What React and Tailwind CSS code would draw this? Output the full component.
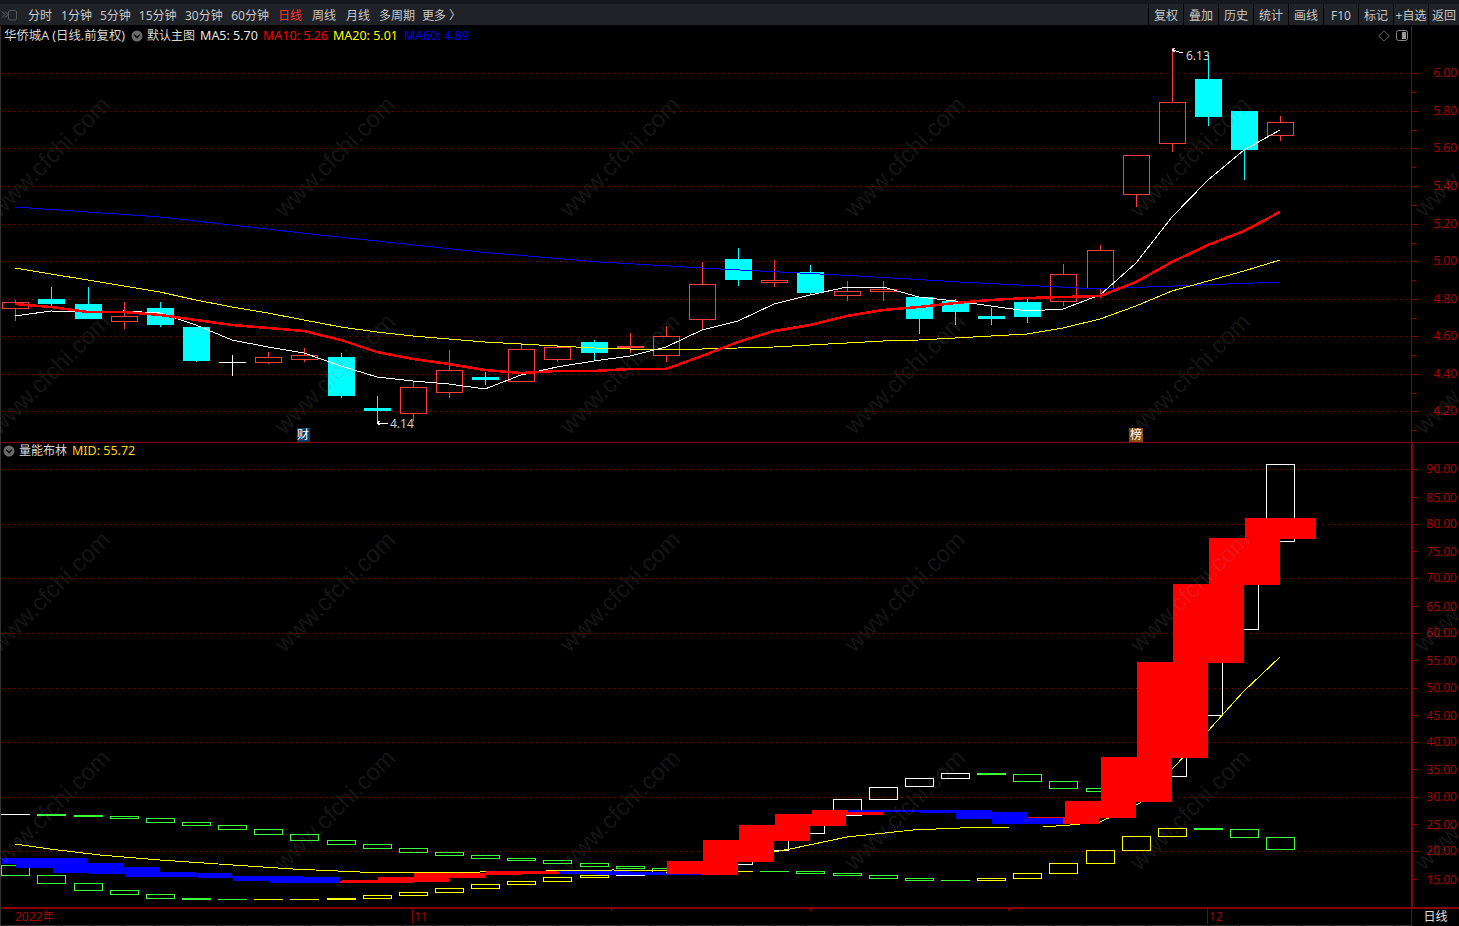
import React from 'react';

const RED = '#ff3c3c';
const CYAN = '#00ffff';
const GREEN = '#3cff3c';
const YELLOW = '#ffff00';
const WHITE = '#ffffff';
const AXIS = '#8a0000';
const LABEL = '#a80000';

const cx = (i) => Math.round(15.3 + 36.14 * i);

// [kind, top, bottom, high, low]  r hollow red, f solid red, c solid cyan, w white cross
const candles = [
  ['r', 302, 309, 300, 321], ['c', 299, 304, 287, 306], ['c', 304, 319, 287, 319], ['r', 316, 322, 302, 329],
  ['c', 308, 325, 302, 327], ['c', 327, 361, 327, 362], ['w', 362, 363, 355, 376], ['r', 357, 363, 352, 364],
  ['r', 355, 360, 348, 362], ['c', 357, 396, 353, 398], ['c', 408, 411, 396, 423], ['r', 387, 414, 382, 421],
  ['r', 370, 393, 350, 398], ['c', 377, 380, 372, 385], ['r', 349, 382, 343, 382], ['r', 347, 360, 345, 362],
  ['c', 342, 353, 340, 360], ['f', 346, 348, 333, 353], ['r', 336, 356, 326, 362], ['r', 284, 320, 262, 329],
  ['c', 259, 280, 248, 286], ['r', 280, 283, 260, 287], ['c', 272, 293, 265, 295], ['r', 291, 296, 281, 301],
  ['r', 289, 292, 281, 301], ['c', 297, 319, 297, 334], ['c', 301, 312, 299, 325], ['c', 316, 319, 308, 325],
  ['c', 302, 317, 299, 323], ['r', 274, 302, 264, 306], ['r', 250, 289, 245, 298], ['r', 155, 195, 155, 207],
  ['r', 102, 144, 48, 152], ['c', 79, 117, 55, 126], ['c', 111, 150, 111, 180], ['r', 122, 136, 116, 141],
];

const ma5 = [316, 311, 312, 311, 313, 325, 340, 347, 353, 366, 377, 381, 384, 389, 375, 367, 361, 356, 347, 330, 321, 304, 295, 287, 287, 297, 301, 306, 311, 309, 295, 263, 217, 180, 150, 130];
const ma10 = [304, 307, 312, 312, 315, 320, 325, 328, 331, 340, 352, 359, 364, 370, 373, 371, 371, 369, 369, 356, 342, 331, 325, 316, 310, 307, 303, 300, 298, 297, 296, 282, 262, 245, 231, 212];
const ma20 = [268, 274, 280, 286, 292, 300, 307, 313, 320, 327, 332, 336, 339, 342, 344, 346, 348, 349, 349, 349, 348, 347, 345, 343, 341, 340, 338, 336, 334, 328, 319, 306, 291, 281, 271, 260];
const ma60 = [[15, 207], [160, 217], [320, 235], [480, 252], [600, 262], [720, 269], [840, 275], [960, 282], [1060, 287], [1093, 289], [1173, 286], [1280, 282]];

const toPoints = (list) => list.map((y, i) => `${cx(i)},${y}`).join(' ');

// [index, top, bottom, colour, solid]
const bands = [
  [0, 814, 815, WHITE, 1], [1, 814, 816, GREEN, 1], [2, 815, 817, GREEN, 1], [3, 816, 819, GREEN], [4, 818, 823, GREEN],
  [5, 822, 826, GREEN], [6, 825, 830, GREEN], [7, 829, 835, GREEN], [8, 834, 841, GREEN], [9, 840, 845, GREEN],
  [10, 844, 849, GREEN], [11, 848, 853, GREEN], [12, 852, 856, GREEN], [13, 855, 859, GREEN], [14, 858, 861, GREEN],
  [15, 860, 864, GREEN], [16, 863, 867, GREEN], [17, 866, 869, GREEN], [18, 868, 871, GREEN], [19, 865, 870, WHITE],
  [20, 851, 865, WHITE], [21, 834, 851, WHITE], [22, 816, 834, WHITE], [23, 799, 816, WHITE], [24, 787, 800, WHITE],
  [25, 778, 787, WHITE], [26, 773, 779, WHITE], [27, 773, 775, GREEN, 1], [28, 774, 782, GREEN], [29, 781, 789, GREEN],
  [30, 788, 792, GREEN], [31, 776, 795, WHITE], [32, 715, 777, WHITE], [33, 630, 716, WHITE], [34, 542, 630, WHITE], [35, 464, 542, WHITE],

  [0, 865, 876, GREEN], [1, 875, 884, GREEN], [2, 883, 891, GREEN], [3, 890, 895, GREEN], [4, 894, 899, GREEN],
  [5, 898, 900, GREEN, 1], [6, 899, 900, GREEN, 1], [7, 899, 900, YELLOW, 1], [8, 899, 900, YELLOW, 1], [9, 898, 900, YELLOW, 1],
  [10, 895, 899, YELLOW], [11, 892, 896, YELLOW], [12, 888, 893, YELLOW], [13, 884, 889, YELLOW], [14, 881, 885, YELLOW],
  [15, 877, 882, YELLOW], [16, 875, 878, YELLOW], [17, 872, 876, WHITE], [18, 870, 873, WHITE], [20, 871, 872, YELLOW, 1],
  [21, 871, 872, GREEN, 1], [22, 871, 874, GREEN], [23, 873, 876, GREEN], [24, 875, 879, GREEN], [25, 878, 881, GREEN],
  [26, 880, 881, GREEN, 1], [27, 878, 881, YELLOW], [28, 873, 879, YELLOW], [29, 863, 874, YELLOW], [30, 850, 864, YELLOW],
  [31, 836, 851, YELLOW], [32, 828, 837, YELLOW], [33, 828, 830, GREEN, 1], [34, 829, 838, GREEN], [35, 837, 850, GREEN],
];

const mid = [[15, 844], [50, 849], [100, 855], [160, 860], [233, 865], [293, 869], [360, 872], [480, 872], [613, 870], [666, 871], [702, 869], [738, 861], [773, 852], [790, 849], [847, 837], [913, 830], [960, 828], [1010, 827], [1043, 827], [1070, 825], [1100, 822], [1140, 803], [1208, 731], [1243, 692], [1280, 657]];

const redBlocks = [
  [9, 881, 883], [10, 880, 883], [11, 877, 882], [12, 873, 878], [13, 873, 875], [14, 871, 874], [15, 872, 874],
  [19, 861, 875], [20, 840, 862], [21, 825, 841], [22, 814, 826], [23, 810, 815], [29, 817, 824], [30, 801, 818],
  [31, 757, 802], [32, 662, 758], [33, 584, 663], [34, 538, 585], [35, 518, 539],
];
const blueBlocks = [
  [0, 858, 864], [1, 858, 868], [2, 863, 873], [3, 867, 874], [4, 872, 877], [5, 873, 877], [6, 876, 878], [7, 876, 881], [8, 877, 883],
  [16, 871, 874], [17, 872, 875], [18, 874, 875], [24, 810, 812], [25, 810, 812], [26, 810, 813], [27, 812, 819], [28, 818, 824],
];

const priceGrid = [6.0, 5.8, 5.6, 5.4, 5.2, 5.0, 4.8, 4.6, 4.4, 4.2].map((v, i) => ({ label: v.toFixed(2), y: Math.round(73.3 + 37.55 * i) }));
const rangeLabels = [90, 85, 80, 75, 70, 65, 60, 55, 50, 45, 40, 35, 30, 25, 20, 15].map((v, i) => ({ value: v, label: v.toFixed(2), y: Math.round(469.3 + 27.29 * i) }));

const tabs = [
  { t: '分时', c: '' },
  { t: '1分钟', c: 'ml-[9px]' },
  { t: '5分钟', c: 'ml-[8px]' },
  { t: '15分钟', c: 'ml-[8px]' },
  { t: '30分钟', c: 'ml-[8.5px]' },
  { t: '60分钟', c: 'ml-[8.5px]' },
  { t: '日线', c: 'ml-[9px] text-[#ff3232]' },
  { t: '周线', c: 'ml-[10px]' },
  { t: '月线', c: 'ml-[10px]' },
  { t: '多周期', c: 'ml-[9px]' },
  { t: '更多', c: 'ml-[7px]' },
];
const tools = ['复权', '叠加', '历史', '统计', '画线', 'F10', '标记', '+自选'];

const marks = [51, 336, 621, 906, 1191, 1476];
const markRows = [158, 375, 593, 811];

const Candle = ({ c, i }) => {
  const [kind, top, bottom, high, low] = c;
  const x = cx(i);
  if (kind === 'w') {
    return (
      <g stroke={WHITE}>
        <line x1={x + 0.5} x2={x + 0.5} y1={high} y2={low} />
        <line x1={x - 13} x2={x + 14} y1={top + 0.5} y2={top + 0.5} />
      </g>
    );
  }
  if (kind === 'r') {
    return (
      <g stroke={RED}>
        <line x1={x + 0.5} x2={x + 0.5} y1={high} y2={top} />
        <line x1={x + 0.5} x2={x + 0.5} y1={bottom} y2={low} />
        <rect x={x - 12.5} y={top + 0.5} width={26} height={bottom - top - 1} fill="none" />
      </g>
    );
  }
  const color = kind === 'c' ? CYAN : RED;
  return (
    <g>
      <line x1={x + 0.5} x2={x + 0.5} y1={high} y2={low} stroke={color} />
      <rect x={x - 13} y={top} width={27} height={bottom - top} fill={color} />
    </g>
  );
};

const Band = ({ b }) => {
  const [i, top, bottom, color, solid] = b;
  const x = cx(i);
  if (solid) return <rect x={x - 14} y={top} width={29} height={bottom - top} fill={color} />;
  return <rect x={x - 13.5} y={top + 0.5} width={28} height={bottom - top - 1} fill="none" stroke={color} />;
};

const Block = ({ b, color }) => {
  const [i, top, bottom] = b;
  const left = Math.max(cx(i) - 35, 2);
  return <rect x={left} y={top} width={cx(i) + 36 - left} height={bottom - top} fill={color} />;
};

const Chevron = () => (
  <svg width="12" height="12" viewBox="0 0 12 12" className="shrink-0">
    <circle cx="6" cy="6" r="5.5" fill="#6a6a6a" />
    <path d="M3.2 4.8 6 7.6 8.8 4.8" fill="none" stroke="#111" strokeWidth="1.5" />
  </svg>
);

export default function App() {
  return (
    <div className="relative flex h-[926px] w-[1459px] flex-col overflow-hidden bg-black text-xs font-['Noto_Sans','Noto_Sans_CJK_SC',sans-serif]">
      {/* toolbar */}
      <div className="flex h-[26px] shrink-0 flex-col border-b border-black bg-[#15171b]">
        <div className="mt-[4px] flex flex-1 items-center justify-between bg-[#1f2227] text-[#c8c8c8]">
          <div className="flex items-center pt-[2px]">
            <svg width="16" height="11" viewBox="0 0 16 11" className="ml-[1px] mr-[11px]">
              <path d="M1 1.5 4 4.5 1 7.5M4 1.5 7 4.5 4 7.5" fill="none" stroke="#666" />
              <rect x="7.5" y=".5" width="8" height="9.5" rx="1.5" fill="none" stroke="#555" />
            </svg>
            <div className="flex">
              {tabs.map((item) => <span key={item.t} className={item.c}>{item.t}</span>)}
            </div>
            <span className="ml-[3px]">〉</span>
          </div>
          <div className="flex h-full">
            {tools.map((t) => (
              <span key={t} className="flex w-[35px] items-center justify-center whitespace-nowrap border-l border-black pt-[2px]">{t}</span>
            ))}
            <span className="flex w-[31px] items-center justify-center whitespace-nowrap border-l border-black pt-[2px]">返回</span>
          </div>
        </div>
      </div>

      {/* price panel */}
      <div className="relative h-[417px] shrink-0">
        <svg width="1459" height="417" viewBox="0 26 1459 417" className="block" shapeRendering="crispEdges">
          {priceGrid.map((g) => (
            <line key={g.y} x1="2" x2="1410" y1={g.y + 0.5} y2={g.y + 0.5} stroke="#900000" strokeDasharray="1 5" />
          ))}
          {candles.map((c, i) => <Candle key={i} c={c} i={i} />)}
          <polyline points={ma60.join(' ')} fill="none" stroke="#0000ff" />
          <polyline points={toPoints(ma20)} fill="none" stroke={YELLOW} />
          <polyline points={toPoints(ma5)} fill="none" stroke={WHITE} />
          <polyline points={toPoints(ma10)} fill="none" stroke="#ff0000" strokeWidth="2.5" />
          <path d="M1172 50 1183 53M1172 50 1175 48M1172 50 1175 52M377 423H388M377 423 380 421M377 423 380 425" stroke={WHITE} fill="none" />
          <text x="1186" y="60" fill="#cfcfcf" fontSize="12">6.13</text>
          <text x="390" y="428" fill="#cfcfcf" fontSize="12">4.14</text>
          <rect x="297" y="428" width="13" height="14" fill="#0a3a6a" />
          <rect x="1129" y="428" width="14" height="14" fill="#8a4a10" />
          <text x="297" y="439" fill="#fff" fontSize="12">财</text>
          <text x="1130" y="439" fill="#fff" fontSize="12">榜</text>
          <line x1="1411.5" x2="1411.5" y1="26" y2="442" stroke={AXIS} />
          {priceGrid.map((g) => (
            <g key={g.y}>
              <line x1="1412" x2="1417" y1={g.y + 0.5} y2={g.y + 0.5} stroke={AXIS} />
              <line x1="1412" x2="1416" y1={g.y + 19.5} y2={g.y + 19.5} stroke={AXIS} />
              <text x="1457" y={g.y + 4} textAnchor="end" fill={LABEL} fontSize="12">{g.label}</text>
            </g>
          ))}
          <line x1="0" x2="1459" y1="442.5" y2="442.5" stroke={AXIS} strokeWidth="2" />
        </svg>
        <div className="absolute left-[4px] top-0 flex h-[20px] items-center text-[#d8d8d8]">
          <span className="mr-[6px] text-[12.4px]">华侨城A (日线.前复权)</span>
          <Chevron />
          <span className="ml-[4px] mr-[5px]">默认主图</span>
          <span className="mr-[5px] text-[12.5px] text-[#e8e8e8]">MA5: 5.70</span>
          <span className="mr-[5px] text-[12.5px] text-[#ff0000]">MA10: 5.26</span>
          <span className="mr-[6px] text-[12.5px] text-[#ffff00]">MA20: 5.01</span>
          <span className="text-[12.5px] text-[#0000ff]">MA60: 4.89</span>
        </div>
        <svg width="32" height="12" viewBox="0 0 32 12" className="absolute left-[1378px] top-[4px]">
          <path d="M6 .8 11.2 6 6 11.2 .8 6Z" fill="none" stroke="#666" />
          <rect x="18.5" y=".5" width="11" height="10" rx="2" fill="none" stroke="#888" />
          <rect x="24" y="2" width="4" height="7" fill="#999" />
        </svg>
      </div>

      {/* volume boll panel */}
      <div className="relative h-[466px] shrink-0">
        <svg width="1459" height="466" viewBox="0 443 1459 466" className="block" shapeRendering="crispEdges">
          {rangeLabels.filter((g) => g.value % 10 === 0).map((g) => (
            <line key={g.y} x1="2" x2="1410" y1={g.y + 0.5} y2={g.y + 0.5} stroke="#900000" strokeDasharray="1 5" />
          ))}
          {bands.map((b, i) => <Band key={i} b={b} />)}
          <polyline points={mid.join(' ')} fill="none" stroke={YELLOW} />
          {redBlocks.map((b, i) => <Block key={i} b={b} color="#ff0000" />)}
          {blueBlocks.map((b, i) => <Block key={i} b={b} color="#0000ff" />)}
          <line x1="1412" x2="1412" y1="443" y2="908" stroke={AXIS} strokeWidth="2" />
          {rangeLabels.map((g) => (
            <g key={g.y}>
              <line x1="1413" x2="1417" y1={g.y + 0.5} y2={g.y + 0.5} stroke={AXIS} />
              <text x="1457" y={g.value % 10 === 0 ? g.y + 4 : g.y + 5} textAnchor="end" fill={LABEL} fontSize="12">{g.label}</text>
            </g>
          ))}
          <line x1="0" x2="1459" y1="908" y2="908" stroke={AXIS} strokeWidth="2" />
        </svg>
        <div className="absolute left-[3px] top-0 flex h-[16px] items-center text-[#d8d8d8]">
          <Chevron />
          <span className="ml-[4px] mr-[5px]">量能布林</span>
          <span className="text-[12.5px] text-[#ffd700]">MID: 55.72</span>
        </div>
      </div>

      {/* time axis */}
      <div className="flex flex-1">
        <svg width="1411" height="17" viewBox="0 909 1411 17" className="block" shapeRendering="crispEdges">
          <text x="15" y="921" fill={LABEL} fontSize="12">2022年</text>
          <text x="414" y="921" fill={LABEL} fontSize="12">11</text>
          <text x="1209" y="921" fill={LABEL} fontSize="12">12</text>
          <path d="M412.5 909V924M1207.5 909V924M611.5 909V911M810.5 909V911M1008.5 909V911" stroke={AXIS} />
          <line x1="0" x2="1411" y1="925.5" y2="925.5" stroke="#2a2a2a" strokeDasharray="30 1" />
        </svg>
        <div className="flex flex-1 items-center justify-center border-l border-[#8a0000] pb-[1px] text-[#e0e0e0]">日线</div>
      </div>

      {/* left edge + watermark, lies over everything */}
      <div className="absolute bottom-0 left-0 top-[26px] w-[1px] bg-[#333]" />
      <svg width="1459" height="926" viewBox="0 0 1459 926" className="pointer-events-none absolute left-0 top-0">
        {markRows.map((y) => marks.map((x) => (
          <text key={`${x}-${y}`} x={x} y={y} textAnchor="middle" dominantBaseline="middle" transform={`rotate(-45 ${x} ${y})`} fill="#808080" fillOpacity="0.18" fontSize="24" fontFamily="'Liberation Sans', sans-serif">www.cfchi.com</text>
        )))}
      </svg>
    </div>
  );
}
